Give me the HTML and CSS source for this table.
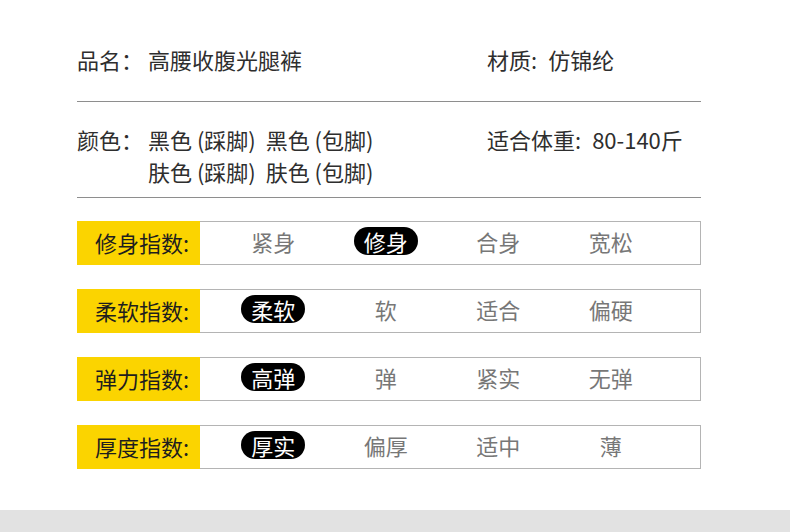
FILE: index.html
```html
<!DOCTYPE html>
<html lang="zh-CN">
<head>
<meta charset="utf-8">
<title>产品信息</title>
<link rel="stylesheet" href="styles.css">
</head>
<body>
<div class="page">
  <div class="wrap">
    <div class="info info-top">
      <div class="col col-left"><span class="k k-left">品名：</span><span class="v">高腰收腹光腿裤</span></div>
      <div class="col"><span class="k k-right">材质:</span><span class="v">仿锦纶</span></div>
    </div>
    <div class="info info-bottom">
      <div class="col col-left"><span class="k k-left">颜色：</span><span class="v">黑色 (踩脚)&nbsp; 黑色 (包脚)<br>肤色 (踩脚)&nbsp; 肤色 (包脚)</span></div>
      <div class="col"><span class="k k-right">适合体重:</span><span class="v">80-140斤</span></div>
    </div>

    <div class="scales">
      <div class="scale">
        <div class="label">修身指数:</div>
        <div class="opts">
          <span class="opt">紧身</span>
          <span class="opt"><span class="pill">修身</span></span>
          <span class="opt">合身</span>
          <span class="opt">宽松</span>
        </div>
      </div>
      <div class="scale">
        <div class="label">柔软指数:</div>
        <div class="opts">
          <span class="opt"><span class="pill">柔软</span></span>
          <span class="opt">软</span>
          <span class="opt">适合</span>
          <span class="opt">偏硬</span>
        </div>
      </div>
      <div class="scale">
        <div class="label">弹力指数:</div>
        <div class="opts">
          <span class="opt"><span class="pill">高弹</span></span>
          <span class="opt">弹</span>
          <span class="opt">紧实</span>
          <span class="opt">无弹</span>
        </div>
      </div>
      <div class="scale">
        <div class="label">厚度指数:</div>
        <div class="opts">
          <span class="opt"><span class="pill">厚实</span></span>
          <span class="opt">偏厚</span>
          <span class="opt">适中</span>
          <span class="opt">薄</span>
        </div>
      </div>
    </div>
  </div>
  <div class="footer"></div>
</div>
</body>
</html>
```

FILE: styles.css
```css
html, body {
  margin: 0;
  padding: 0;
  background: #ffffff;
}

body {
  font-family: "Noto Sans CJK SC", "Noto Sans", sans-serif;
  font-size: 22px;
  color: #2e2e2e;
}

.page {
  min-height: 532px;
  display: flex;
  flex-direction: column;
}

.wrap {
  width: 624px;
  padding: 43px 0 0 77px;
}

.info {
  display: flex;
  line-height: 32px;
  border-bottom: 1px solid #8e8e8e;
}

.info-top {
  padding-bottom: 26px;
}

.info-bottom {
  padding-top: 21px;
  padding-bottom: 10px;
}

.col {
  display: flex;
  align-items: flex-start;
}

.col-left {
  width: 410px;
}

.k {
  white-space: nowrap;
}

.k-left {
  width: 71px;
}

.k-right {
  margin-right: 11px;
}

.v {
  white-space: nowrap;
}

.scales {
  margin-top: 23px;
  display: flex;
  flex-direction: column;
  gap: 24px;
}

.scale {
  display: flex;
  height: 42px;
  border: 1px solid #b4b4b4;
  align-items: center;
}

.label {
  align-self: stretch;
  margin: -1px 0 -1px -1px;
  width: 105px;
  padding-left: 18px;
  padding-bottom: 3px;
  background: #fbd400;
  color: #1e1e1e;
  display: flex;
  align-items: center;
}

.opts {
  display: grid;
  grid-template-columns: repeat(4, 112.5px);
  padding-left: 17px;
  padding-bottom: 4px;
  color: #777777;
}

.opt {
  display: flex;
  justify-content: center;
  align-items: center;
  line-height: 28px;
}

.pill {
  background: #000000;
  color: #ffffff;
  border-radius: 14px;
  padding: 0 10px;
  height: 28px;
  line-height: 28px;
}

.footer {
  margin-top: auto;
  height: 22px;
  background: #e2e2e2;
}
```
